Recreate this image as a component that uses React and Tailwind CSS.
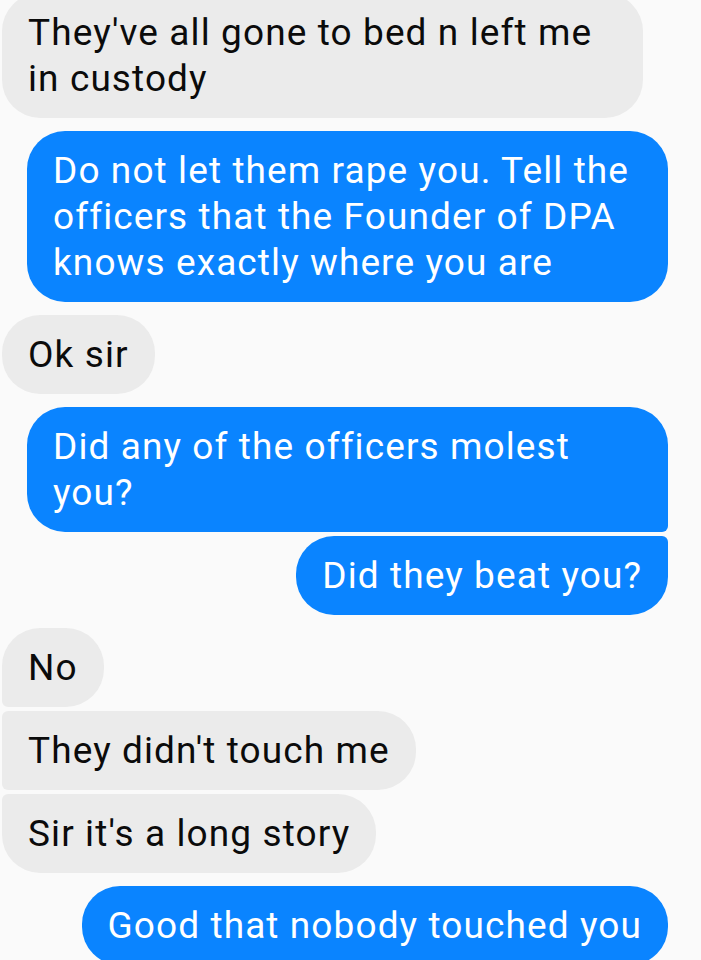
import React from "react";

const font = { fontFamily: "Roboto, 'Noto Sans', sans-serif" };

function Bubble({ side, children, corners, wide }) {
  const base =
    "py-[16.5px] px-[26px] text-[37px] leading-[46px] tracking-[1.1px] " +
    (wide ? "w-[641px] " : "w-fit max-w-[641px] ");
  const color =
    side === "left" ? "bg-[#ebebeb] text-[#0b0b0b]" : "bg-[#0a84ff] text-white";
  return <div className={base + color + " " + corners}>{children}</div>;
}

export default function App() {
  return (
    <div
      className="w-[701px] h-[960px] overflow-hidden bg-[#fafafa] pl-[2px] pr-[33px]"
      style={font}
    >
      <div className="flex flex-col -mt-[7px]">
        <div className="flex justify-start">
          <Bubble side="left" wide corners="rounded-[38px]">
            They've all gone to bed n left me
            <br />
            in custody
          </Bubble>
        </div>
        <div className="flex justify-end mt-[13px]">
          <Bubble side="right" wide corners="rounded-[38px]">
            Do not let them rape you. Tell the
            <br />
            officers that the Founder of DPA
            <br />
            knows exactly where you are
          </Bubble>
        </div>
        <div className="flex justify-start mt-[13px]">
          <Bubble side="left" corners="rounded-[38px]">
            Ok sir
          </Bubble>
        </div>
        <div className="flex justify-end mt-[13px]">
          <Bubble side="right" wide corners="rounded-[38px] rounded-br-[6px]">
            Did any of the officers molest
            <br />
            you?
          </Bubble>
        </div>
        <div className="flex justify-end mt-[4px]">
          <Bubble side="right" corners="rounded-[38px] rounded-tr-[6px]">
            Did they beat you?
          </Bubble>
        </div>
        <div className="flex justify-start mt-[13px]">
          <Bubble side="left" corners="rounded-[38px] rounded-bl-[6px]">
            No
          </Bubble>
        </div>
        <div className="flex justify-start mt-[4px]">
          <Bubble
            side="left"
            corners="rounded-[38px] rounded-tl-[6px] rounded-bl-[6px]"
          >
            They didn't touch me
          </Bubble>
        </div>
        <div className="flex justify-start mt-[4px]">
          <Bubble side="left" corners="rounded-[38px] rounded-tl-[6px]">
            Sir it's a long story
          </Bubble>
        </div>
        <div className="flex justify-end mt-[13px]">
          <Bubble side="right" corners="rounded-[38px]">
            Good that nobody touched you
          </Bubble>
        </div>
      </div>
    </div>
  );
}
